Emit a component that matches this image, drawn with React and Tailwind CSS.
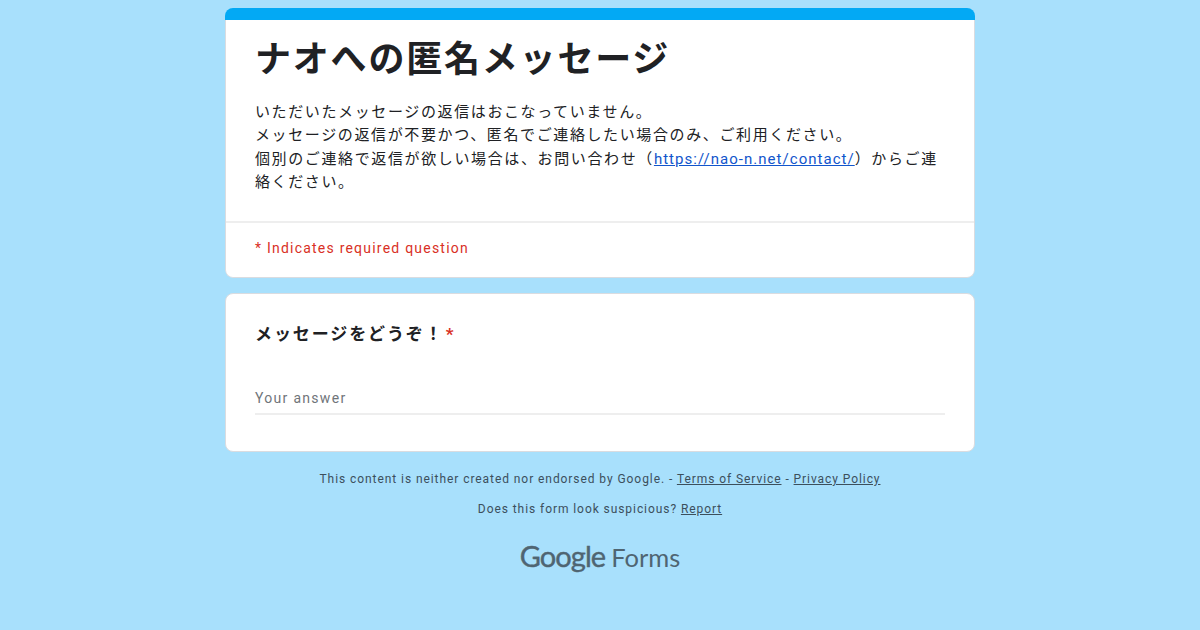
const FONT = "font-['Roboto','Noto_Sans_CJK_JP',sans-serif]";

export default function App() {
  return (
    <div className={`min-h-[630px] w-[1200px] overflow-hidden bg-[#a8e0fc] ${FONT}`}>
      <div className="mx-auto w-[750px] pt-2">
        <div className="overflow-hidden rounded-lg">
          <div className="h-3 bg-[#03a9f4]" />
          <div className="h-[258px] rounded-b-lg border-x border-b border-[#dadce0] bg-white">
            <div className="h-[203px] border-b-2 border-[#eeeeee] px-[29px] pt-[15px]">
              <h1 className="translate-y-[2px] text-[36px] leading-[46px] font-bold tracking-[1.8px] text-[#202124]">ナオへの匿名メッセージ</h1>
              <div className="mt-[20px] text-[15px] leading-[23.4px] tracking-[1.62px] text-[#202124]">
                <p>いただいたメッセージの返信はおこなっていません。</p>
                <p>メッセージの返信が不要かつ、匿名でご連絡したい場合のみ、ご利用ください。</p>
                <p>
                  個別のご連絡で返信が欲しい場合は、お問い合わせ（
                  <a href="#" className="tracking-[1.03px] text-[#1155cc] underline">https://nao-n.net/contact/</a>
                  ）からご連絡ください。
                </p>
              </div>
            </div>
            <div className="px-[29px] pt-[15px] text-sm leading-[20px] tracking-[1.22px] text-[#d93025]">* Indicates required question</div>
          </div>
        </div>

        <div className="mt-[15px] h-[159px] rounded-lg border border-[#dadce0] bg-white px-[29px] pt-[28px]">
          <div className="text-[17px] leading-6 font-bold tracking-[1.9px] text-[#202124]">
            メッセージをどうぞ！<span className="ml-[2px] text-[#d93025]">*</span>
          </div>
          <div className="mt-[40px] h-[29px] border-b-2 border-[#eeeeee] pt-[2px] text-sm leading-[20px] tracking-[1.3px] text-[#70757a]">Your answer</div>
        </div>

        <div className="mt-[19px] text-center text-xs leading-4 tracking-[0.93px] text-[#3c4f5c]">
          <p>
            This content is neither created nor endorsed by Google. - <a href="#" className="underline">Terms of Service</a> - <a href="#" className="underline">Privacy Policy</a>
          </p>
          <p className="mt-[14px]">
            Does this form look suspicious? <a href="#" className="underline">Report</a>
          </p>
        </div>

        <div className="mt-[21px] flex items-baseline justify-center gap-[6px] font-['Lato',sans-serif] text-[#4f6572]">
          <span className="text-[29px] leading-[36px] tracking-[-0.9px] [-webkit-text-stroke:0.4px_#4f6572]">Google</span>
          <span className="text-[25.5px] leading-[36px]">Forms</span>
        </div>
      </div>
    </div>
  );
}
